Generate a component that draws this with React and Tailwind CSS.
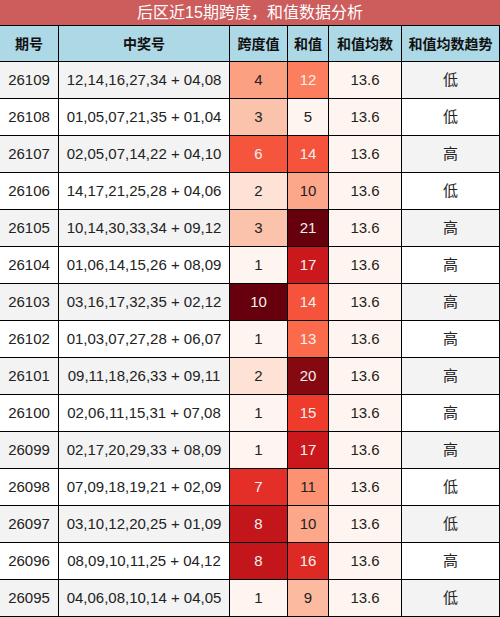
const rows = [
  ["26109", "12,14,16,27,34 + 04,08", 4, 12, "低"],
  ["26108", "01,05,07,21,35 + 01,04", 3, 5, "低"],
  ["26107", "02,05,07,14,22 + 04,10", 6, 14, "高"],
  ["26106", "14,17,21,25,28 + 04,06", 2, 10, "低"],
  ["26105", "10,14,30,33,34 + 09,12", 3, 21, "高"],
  ["26104", "01,06,14,15,26 + 08,09", 1, 17, "高"],
  ["26103", "03,16,17,32,35 + 02,12", 10, 14, "高"],
  ["26102", "01,03,07,27,28 + 06,07", 1, 13, "高"],
  ["26101", "09,11,18,26,33 + 09,11", 2, 20, "高"],
  ["26100", "02,06,11,15,31 + 07,08", 1, 15, "高"],
  ["26099", "02,17,20,29,33 + 08,09", 1, 17, "高"],
  ["26098", "07,09,18,19,21 + 02,09", 7, 11, "低"],
  ["26097", "03,10,12,20,25 + 01,09", 8, 10, "低"],
  ["26096", "08,09,10,11,25 + 04,12", 8, 16, "高"],
  ["26095", "04,06,08,10,14 + 04,05", 1, 9, "低"],
];

// matplotlib "Reds"
const reds = ["#fff5f0", "#fee0d2", "#fcbba1", "#fc9272", "#fb6a4a", "#ef3b2c", "#cb181d", "#a50f15", "#67000d"];

const hex = (h) => [1, 3, 5].map((i) => parseInt(h.slice(i, i + 2), 16));

const shade = (t) => {
  const p = Math.min(Math.max(t, 0), 1) * (reds.length - 1);
  const i = Math.min(Math.floor(p), reds.length - 2);
  const f = p - i;
  const a = hex(reds[i]);
  const b = hex(reds[i + 1]);
  const rgb = a.map((v, k) => Math.round(v + (b[k] - v) * f));
  const lum = rgb
    .map((v) => v / 255)
    .map((v) => (v <= 0.03928 ? v / 12.92 : ((v + 0.055) / 1.055) ** 2.4));
  const L = 0.2126 * lum[0] + 0.7152 * lum[1] + 0.0722 * lum[2];
  return {
    backgroundColor: `rgb(${rgb.join(",")})`,
    color: L < 0.408 ? "#f1f1f1" : "#222222",
  };
};

const spans = rows.map((r) => r[2]);
const sums = rows.map((r) => r[3]);
const norm = (v, arr) => (v - Math.min(...arr)) / (Math.max(...arr) - Math.min(...arr));

const cols = "grid grid-cols-[59px_171px_58px_41px_73px_98px]";
const cell = "flex items-center justify-center border-r border-b border-black";

export default function App() {
  return (
    <div className="w-[500px] h-[617px] bg-white text-[#222] font-['Liberation_Sans','Noto_Sans_CJK_SC',sans-serif] overflow-hidden">
      <div className="h-[26px] bg-[#cd5c5c] border-b border-black flex items-center justify-center text-white text-base">
        后区近15期跨度，和值数据分析
      </div>
      <div className={`${cols} h-[36px] bg-[#add8e6] text-sm font-bold text-[#111]`}>
        {["期号", "中奖号", "跨度值", "和值", "和值均数", "和值均数趋势"].map((h) => (
          <div key={h} className={cell}>
            {h}
          </div>
        ))}
      </div>
      {rows.map((r, i) => {
        const zebra = i % 2 === 0 ? "bg-[#f3f3f3]" : "bg-white";
        return (
          <div key={r[0]} className={`${cols} h-[37px] text-[15px]`}>
            <div className={`${cell} ${zebra}`}>{r[0]}</div>
            <div className={`${cell} ${zebra}`}>{r[1]}</div>
            <div className={cell} style={shade(norm(r[2], spans))}>
              {r[2]}
            </div>
            <div className={cell} style={shade(norm(r[3], sums))}>
              {r[3]}
            </div>
            <div className={`${cell} bg-[#fff5f0]`}>13.6</div>
            <div className={`${cell} ${zebra}`}>{r[4]}</div>
          </div>
        );
      })}
    </div>
  );
}
